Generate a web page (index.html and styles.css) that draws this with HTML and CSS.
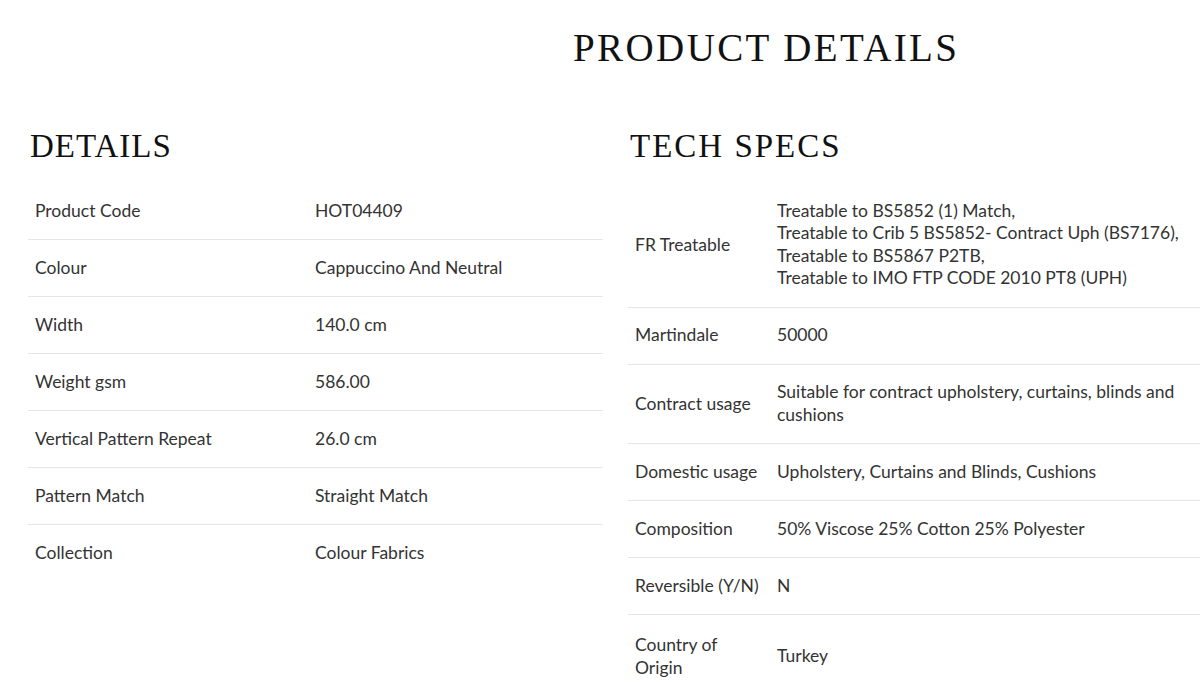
FILE: index.html
```html
<!DOCTYPE html>
<html lang="en">
<head>
<meta charset="utf-8">
<title>Product Details</title>
<link rel="stylesheet" href="styles.css">
</head>
<body>
<main class="page">
  <h1 class="page-title">PRODUCT DETAILS</h1>
  <div class="columns">
    <section class="col">
      <h2 class="col-title">DETAILS</h2>
      <table class="spec spec-details">
        <tr><td class="label">Product Code</td><td class="value">HOT04409</td></tr>
        <tr><td class="label">Colour</td><td class="value">Cappuccino And Neutral</td></tr>
        <tr><td class="label">Width</td><td class="value">140.0 cm</td></tr>
        <tr><td class="label">Weight gsm</td><td class="value">586.00</td></tr>
        <tr><td class="label">Vertical Pattern Repeat</td><td class="value">26.0 cm</td></tr>
        <tr><td class="label">Pattern Match</td><td class="value">Straight Match</td></tr>
        <tr class="last"><td class="label">Collection</td><td class="value">Colour Fabrics</td></tr>
      </table>
    </section>
    <section class="col">
      <h2 class="col-title col-title-wide">TECH SPECS</h2>
      <table class="spec spec-tech">
        <tr><td class="label">FR Treatable</td><td class="value">Treatable to BS5852 (1) Match,<br>Treatable to Crib 5 BS5852- Contract Uph (BS7176),<br>Treatable to BS5867 P2TB,<br>Treatable to IMO FTP CODE 2010 PT8 (UPH)</td></tr>
        <tr><td class="label">Martindale</td><td class="value">50000</td></tr>
        <tr><td class="label">Contract usage</td><td class="value">Suitable for contract upholstery, curtains, blinds and cushions</td></tr>
        <tr><td class="label">Domestic usage</td><td class="value">Upholstery, Curtains and Blinds, Cushions</td></tr>
        <tr><td class="label">Composition</td><td class="value">50% Viscose 25% Cotton 25% Polyester</td></tr>
        <tr><td class="label">Reversible (Y/N)</td><td class="value">N</td></tr>
        <tr class="last"><td class="label">Country of Origin</td><td class="value">Turkey</td></tr>
      </table>
    </section>
  </div>
</main>
</body>
</html>
```
FILE: styles.css
```css
html, body {
  margin: 0;
  padding: 0;
  background: #ffffff;
  overflow: hidden;
}
.page {
  width: 1175px;
  padding: 0 0 0 28px;
  font-family: "Lato", "Liberation Sans", sans-serif;
  color: #333333;
}
.page-title {
  margin: 0;
  padding: 25px 0 0 545px;
  font-family: "Liberation Serif", serif;
  font-weight: normal;
  font-size: 39px;
  line-height: 46px;
  letter-spacing: 2.4px;
  color: #111111;
}
.columns {
  display: grid;
  grid-template-columns: 575px 575px;
  column-gap: 25px;
  margin-top: 55px;
}
.col-title {
  margin: 0;
  padding-left: 2px;
  font-family: "Liberation Serif", serif;
  font-weight: normal;
  font-size: 33px;
  line-height: 40px;
  letter-spacing: 1px;
  color: #111111;
}
.col-title-wide {
  letter-spacing: 2px;
}
.spec {
  width: 100%;
  border-collapse: collapse;
  margin-top: 17px;
  font-size: 17.5px;
  line-height: 22.5px;
}
.spec td {
  padding: 16.75px 7px;
  vertical-align: middle;
  border-bottom: 1px solid #e6e6e6;
}
.spec tr.last td {
  border-bottom: none;
}
.spec-details .label {
  width: 266px;
}
.spec-tech .label {
  width: 128px;
}
.spec-tech tr.last td {
  padding-top: 19px;
}
```
